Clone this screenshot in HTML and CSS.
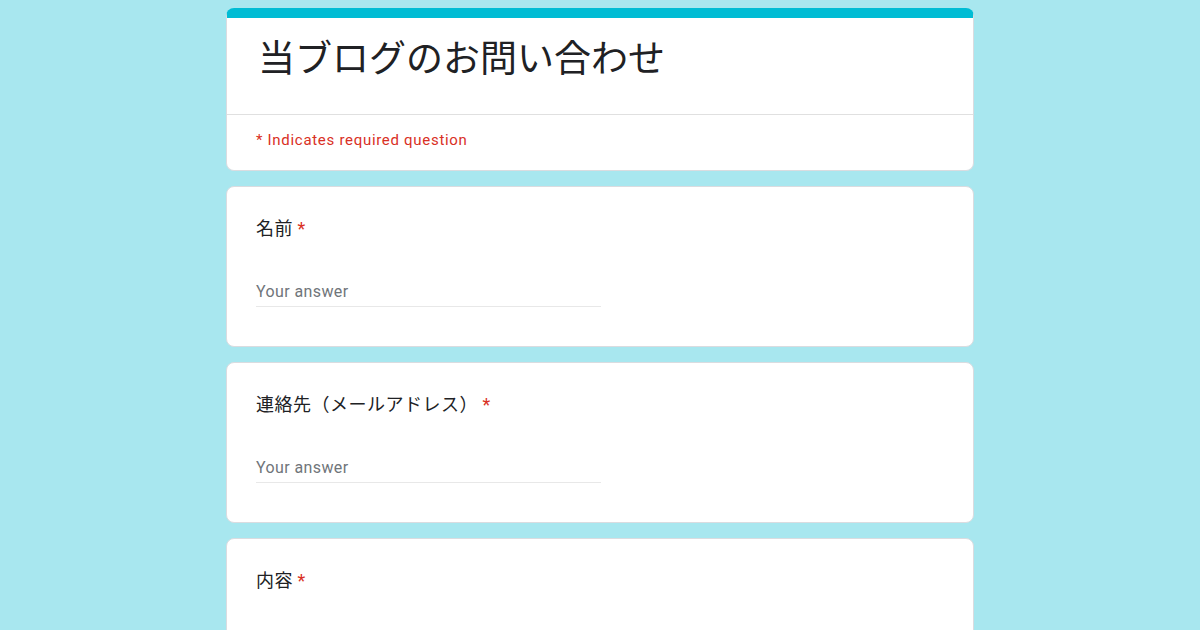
FILE: index.html
```html
<!DOCTYPE html>
<html lang="ja">
<head>
    <meta charset="UTF-8">
    <meta name="viewport" content="width=device-width, initial-scale=1.0">
    <title>当ブログのお問い合わせ</title>
    <link rel="stylesheet" href="styles.css">
</head>
<body>
    <div class="form-wrap">
        <div class="card header-card">
            <div class="header-top">
                <h1 class="form-title">当ブログのお問い合わせ</h1>
            </div>
            <div class="header-note">* Indicates required question</div>
        </div>

        <div class="card question">
            <div class="q-label">名前 <span class="req">*</span></div>
            <div class="answer">Your answer</div>
        </div>

        <div class="card question">
            <div class="q-label">連絡先（メールアドレス） <span class="req">*</span></div>
            <div class="answer">Your answer</div>
        </div>

        <div class="card question">
            <div class="q-label">内容 <span class="req">*</span></div>
            <div class="answer long">Your answer</div>
        </div>
    </div>
</body>
</html>
```

FILE: styles.css
```css
body {
    margin: 0;
    background: #a8e7ef;
    font-family: Roboto, "Noto Sans CJK JP", sans-serif;
    color: #202124;
    overflow: hidden;
}
.form-wrap {
    width: 748px;
    margin: 0 auto;
    padding-top: 8px;
    display: flex;
    flex-direction: column;
    gap: 15px;
}
.card {
    background: #fff;
    border: 1px solid #dadce0;
    border-radius: 8px;
}
.header-card {
    border-top: 10px solid #00bcd4;
    overflow: hidden;
}
.header-top {
    height: 96px;
    padding: 0 31px;
    display: flex;
    align-items: center;
    border-bottom: 1px solid #e0e0e0;
}
.form-title {
    margin: 0;
    font-family: "Noto Sans CJK JP", sans-serif;
    font-size: 37px;
    font-weight: 400;
    color: #202124;
    line-height: 1.2;
    padding-bottom: 20px;
}
.header-note {
    height: 55px;
    padding: 0 29px 5px;
    box-sizing: border-box;
    display: flex;
    align-items: center;
    font-size: 15px;
    letter-spacing: 0.7px;
    color: #d93025;
}
.question {
    padding: 28px 29px 39px;
}
.q-label {
    font-family: "Noto Sans CJK JP", sans-serif;
    font-size: 18px;
    line-height: 24px;
    letter-spacing: 0.5px;
}
.req {
    color: #d93025;
    font-family: Roboto, sans-serif;
}
.answer {
    margin-top: 36px;
    width: 345px;
    height: 29px;
    border-bottom: 1px solid #e8e8e8;
    font-size: 16px;
    letter-spacing: 0.4px;
    color: #70757a;
    line-height: 30px;
}
.answer.long {
    margin-top: 46px;
    width: 100%;
}
```
